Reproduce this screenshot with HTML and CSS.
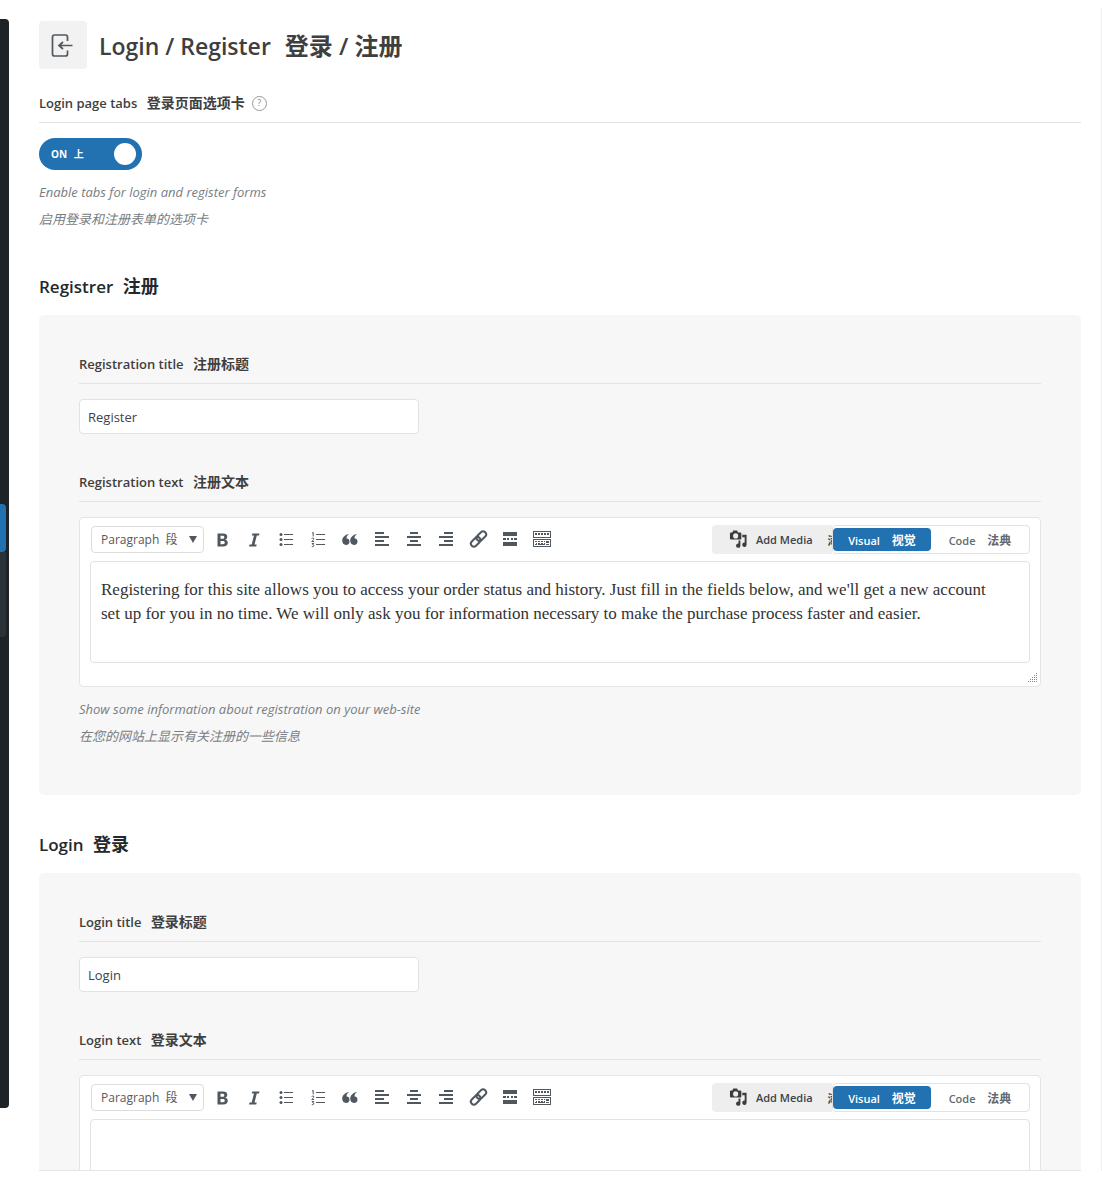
FILE: index.html
```html
<!DOCTYPE html>
<html lang="en">
<head>
    <meta charset="UTF-8">
    <meta name="viewport" content="width=device-width, initial-scale=1.0">
    <title>Login / Register</title>
    <link rel="stylesheet" href="styles.css">
</head>
<body>

    <!-- Icons shared by both editors -->
    <svg class="icon-defs" aria-hidden="true">
        <symbol id="icon-bold" viewBox="0 0 20 20">
            <path fill-rule="evenodd" d="M5.500 3.500h5.600c2.700 0 4.200 1.200 4.200 3.300 0 1.500-.8 2.600-2.200 2.900 1.700.3 2.700 1.400 2.700 3.100 0 2.400-1.700 3.700-4.600 3.700H5.500zM8.500 5.800v3h2c1.200 0 1.800-.5 1.800-1.500S11.700 5.800 10.500 5.800zM8.500 11v3.200h2.300c1.300 0 2-.5 2-1.600S12.100 11 10.800 11z"/>
        </symbol>
        <symbol id="icon-italic" viewBox="0 0 20 20">
            <path d="M8.300 3.500h7.200l-.5 2h-2.200l-2.300 9h2.200l-.5 2H5l.5-2h2.200l2.300-9H7.800z"/>
        </symbol>
        <symbol id="icon-ul" viewBox="0 0 20 20">
            <path d="M8 4h9v1H8zM8 9h9v1H8zM8 14h9v1H8z"/>
            <circle cx="5" cy="4.500" r="1.500"/>
            <circle cx="5" cy="9.500" r="1.500"/>
            <circle cx="5" cy="14.500" r="1.500"/>
        </symbol>
        <symbol id="icon-ol" viewBox="0 0 20 20">
            <path d="M8 4h9v1H8zM8 9h9v1H8zM8 14h9v1H8z"/>
            <path class="thin" d="M4 3.200l1.200-.8v4M3.800 8.600c.4-1 2.200-.8 2 .4-.1.700-1.200 1.500-2 2.500h2.200M3.800 13.500h2l-1.100 1.400c1.900-.1 1.500 2.200-.9 1.700"/>
        </symbol>
        <symbol id="icon-quote" viewBox="0 0 20 20">
            <path d="M9.300 4C6.900 5.300 6.300 7.300 6.600 8.500c1.600-.1 2.900 1.200 2.900 3.100 0 2-1.300 3.400-3.400 3.400-2.400 0-3.900-1.900-3.900-4.400C2.200 7.600 4.900 4.600 9.300 4zM17.300 4c-2.400 1.300-3 3.300-2.700 4.500 1.600-.1 2.900 1.200 2.900 3.100 0 2-1.300 3.400-3.400 3.400-2.400 0-3.900-1.900-3.900-4.400 0-3 2.700-6 7.100-6.600z"/>
        </symbol>
        <symbol id="icon-left" viewBox="0 0 20 20">
            <path d="M3 2h9v2H3zM3 6h14v2H3zM3 10h9v2H3zM3 14h14v2H3z"/>
        </symbol>
        <symbol id="icon-center" viewBox="0 0 20 20">
            <path d="M6 2h8v2H6zM3 6h14v2H3zM6 10h8v2H6zM3 14h14v2H3z"/>
        </symbol>
        <symbol id="icon-right" viewBox="0 0 20 20">
            <path d="M8 2h9v2H8zM3 6h14v2H3zM8 10h9v2H8zM3 14h14v2H3z"/>
        </symbol>
        <symbol id="icon-link" viewBox="0 0 20 20">
            <g class="thick" transform="rotate(-45 10.500 9)">
                <rect x="1" y="6" width="11" height="6" rx="3"/>
                <rect x="9" y="6" width="11" height="6" rx="3"/>
            </g>
        </symbol>
        <symbol id="icon-more" viewBox="0 0 20 20">
            <path d="M3 2h14v4H3zM3 8h3v2H3zM7 8h2v2H7zM11 8h2v2h-2zM14 8h3v2h-3zM3 12h14v4H3z"/>
        </symbol>
        <symbol id="icon-keyboard" viewBox="0 0 20 20">
            <path fill-rule="evenodd" d="M1 1h18v7H1zM2 2v5h16V2zM1 9h18v8H1zM2 10v6h16v-6z"/>
            <path d="M3 3h2v2H3zM6 3h2v2H6zM9 3h2v2H9zM12 3h2v2h-2zM15 3h2v2h-2zM3 11h2v1H3zM6 11h2v1H6zM9 11h2v1H9zM12 11h1v1h-1zM14 11h3v2h-3zM4 13h1v1H4zM6 13h2v1H6zM9 13h2v1H9zM12 13h1v1h-1zM3 14h2v1H3zM6 14h7v1H6zM14 14h3v1h-3z"/>
        </symbol>
        <symbol id="icon-media" viewBox="0 0 20 20">
            <path fill-rule="evenodd" d="M2 2.500h1.500L4.500.5h4l1 2h2.500c.6 0 1 .4 1 1V9c0 .6-.4 1-1 1H2c-.6 0-1-.4-1-1V3.500c0-.6.4-1 1-1zM7 3.500a2.700 2.700 0 1 0 0 5.400 2.700 2.700 0 0 0 0-5.400z"/>
            <path d="M14 5h4.500v10.500a2.300 2.300 0 1 1-2-2.300V7.500H14zM12 11v5.500a2.300 2.300 0 1 1-2-2.300V11z"/>
        </symbol>
    </svg>

    <div class="page">
        <nav class="sidebar" aria-label="Admin menu">
            <div class="menu-current"></div>
            <div class="submenu"></div>
        </nav>

        <main class="content">
            <div class="options">
                <header class="page-header">
                    <span class="page-icon">
                        <svg viewBox="0 0 24 24" aria-hidden="true">
                            <path d="M16.500 8V4Q16.500 2 14.500 2H3.500Q1.500 2 1.500 4V21Q1.500 23 3.500 23H14.500Q16.500 23 16.500 21V17.500M21.500 12.500H8M12 9L8 12.500L12 16"/>
                        </svg>
                    </span>
                    <h1>Login / Register <span lang="zh">登录 / 注册</span></h1>
                </header>

                <div class="field">
                    <div class="field-title">
                        <label for="loginTabs">Login page tabs <span lang="zh">登录页面选项卡</span></label>
                        <button type="button" class="hint" aria-label="Help">?</button>
                    </div>
                    <div class="switch">
                        <input type="checkbox" id="loginTabs" checked>
                        <span class="switch-text">ON <span lang="zh">上</span></span>
                        <span class="knob"></span>
                    </div>
                    <p class="description">Enable tabs for login and register forms</p>
                    <p class="description" lang="zh">启用登录和注册表单的选项卡</p>
                </div>

                <h2>Registrer <span lang="zh">注册</span></h2>
                <section class="group">
                    <div class="field">
                        <div class="field-title">
                            <label for="regTitle">Registration title <span lang="zh">注册标题</span></label>
                        </div>
                        <input type="text" class="text-input" id="regTitle" value="Register">
                    </div>

                    <div class="field">
                        <div class="field-title">
                            <label for="regText">Registration text <span lang="zh">注册文本</span></label>
                        </div>
                        <div class="editor">
                            <div class="toolbar">
                                <select class="format" aria-label="Format">
                                    <option>Paragraph&nbsp; 段</option>
                                </select>
                                <div class="tools">
                                    <button type="button" aria-label="Bold"><svg><use href="#icon-bold"/></svg></button>
                                    <button type="button" aria-label="Italic"><svg><use href="#icon-italic"/></svg></button>
                                    <button type="button" aria-label="Bulleted list"><svg><use href="#icon-ul"/></svg></button>
                                    <button type="button" aria-label="Numbered list"><svg><use href="#icon-ol"/></svg></button>
                                    <button type="button" aria-label="Blockquote"><svg><use href="#icon-quote"/></svg></button>
                                    <button type="button" aria-label="Align left"><svg><use href="#icon-left"/></svg></button>
                                    <button type="button" aria-label="Align center"><svg><use href="#icon-center"/></svg></button>
                                    <button type="button" aria-label="Align right"><svg><use href="#icon-right"/></svg></button>
                                    <button type="button" aria-label="Link"><svg><use href="#icon-link"/></svg></button>
                                    <button type="button" aria-label="Read more"><svg><use href="#icon-more"/></svg></button>
                                    <button type="button" aria-label="Toolbar toggle"><svg><use href="#icon-keyboard"/></svg></button>
                                </div>
                                <button type="button" class="add-media"><svg><use href="#icon-media"/></svg>Add Media <span lang="zh">添</span></button>
                                <div class="mode">
                                    <button type="button" class="active">Visual <span lang="zh">视觉</span></button>
                                    <button type="button">Code <span lang="zh">法典</span></button>
                                </div>
                            </div>
                            <textarea id="regText">Registering for this site allows you to access your order status and history. Just fill in the fields below, and we'll get a new account set up for you in no time. We will only ask you for information necessary to make the purchase process faster and easier.</textarea>
                            <div class="statusbar">
                                <svg class="grip" viewBox="0 0 10 10" aria-hidden="true">
                                    <path d="M8.500 0v10M6.500 2v8M4.500 4v6M2.500 6v4M.5 8v2"/>
                                </svg>
                            </div>
                        </div>
                        <p class="description">Show some information about registration on your web-site</p>
                        <p class="description" lang="zh">在您的网站上显示有关注册的一些信息</p>
                    </div>
                </section>

                <h2>Login <span lang="zh">登录</span></h2>
                <section class="group">
                    <div class="field">
                        <div class="field-title">
                            <label for="loginTitle">Login title <span lang="zh">登录标题</span></label>
                        </div>
                        <input type="text" class="text-input" id="loginTitle" value="Login">
                    </div>

                    <div class="field">
                        <div class="field-title">
                            <label for="loginText">Login text <span lang="zh">登录文本</span></label>
                        </div>
                        <div class="editor">
                            <div class="toolbar">
                                <select class="format" aria-label="Format">
                                    <option>Paragraph&nbsp; 段</option>
                                </select>
                                <div class="tools">
                                    <button type="button" aria-label="Bold"><svg><use href="#icon-bold"/></svg></button>
                                    <button type="button" aria-label="Italic"><svg><use href="#icon-italic"/></svg></button>
                                    <button type="button" aria-label="Bulleted list"><svg><use href="#icon-ul"/></svg></button>
                                    <button type="button" aria-label="Numbered list"><svg><use href="#icon-ol"/></svg></button>
                                    <button type="button" aria-label="Blockquote"><svg><use href="#icon-quote"/></svg></button>
                                    <button type="button" aria-label="Align left"><svg><use href="#icon-left"/></svg></button>
                                    <button type="button" aria-label="Align center"><svg><use href="#icon-center"/></svg></button>
                                    <button type="button" aria-label="Align right"><svg><use href="#icon-right"/></svg></button>
                                    <button type="button" aria-label="Link"><svg><use href="#icon-link"/></svg></button>
                                    <button type="button" aria-label="Read more"><svg><use href="#icon-more"/></svg></button>
                                    <button type="button" aria-label="Toolbar toggle"><svg><use href="#icon-keyboard"/></svg></button>
                                </div>
                                <button type="button" class="add-media"><svg><use href="#icon-media"/></svg>Add Media <span lang="zh">添</span></button>
                                <div class="mode">
                                    <button type="button" class="active">Visual <span lang="zh">视觉</span></button>
                                    <button type="button">Code <span lang="zh">法典</span></button>
                                </div>
                            </div>
                            <textarea id="loginText"></textarea>
                        </div>
                    </div>
                </section>
            </div>
        </main>
    </div>

</body>
</html>
```
FILE: styles.css
```css
* {
    box-sizing: border-box;
}
body {
    margin: 0;
    font-family: "Open Sans", "Noto Sans CJK SC", sans-serif;
    font-size: 13px;
    color: #3c434a;
    background-color: #fff;
}
button, input, select {
    font-family: inherit;
}
h1, h2, p {
    margin: 0;
}
.icon-defs {
    display: none;
}
.page {
    display: flex;
    height: 100vh;
    padding: 8px 0 7px;
    overflow: hidden;
}

/* Sidebar */
.sidebar {
    flex: none;
    width: 9px;
    margin: 11px 0 63px;
    padding: 485px 3px 0 0;
    background-color: #1d2327;
    border-radius: 0 4px 4px 0;
}
.menu-current {
    height: 48px;
    background-color: #2271b1;
    border-radius: 0 4px 4px 0;
}
.submenu {
    height: 85px;
    background-color: #2c3338;
    border-radius: 0 0 4px 0;
}

/* Content */
.content {
    flex: 1;
    min-width: 0;
    padding: 13px 20px 0 30px;
    border-right: 1px solid #eee;
}
.options {
    height: 100%;
    border-bottom: 1px solid #e5e5e5;
    overflow: hidden;
}
.page-header {
    display: flex;
    align-items: center;
    gap: 12px;
    margin-bottom: 25px;
}
.page-icon {
    display: flex;
    align-items: center;
    justify-content: center;
    width: 48px;
    height: 48px;
    background-color: #f2f2f2;
    border-radius: 4px;
}
.page-icon svg {
    width: 24px;
    height: 24px;
    fill: none;
    stroke: #50575e;
    stroke-width: 1.7;
}
h1 {
    padding-top: 2px;
    font-size: 23px;
    font-weight: 600;
    line-height: 32px;
    color: #3f3f3f;
}
h1 span {
    margin-left: 8px;
    font-size: 24px;
}
h2 {
    margin: 37px 0 16px;
    font-size: 17px;
    font-weight: 600;
    line-height: 24px;
    color: #23282d;
}
h2 span {
    margin-left: 5px;
    font-size: 18px;
}
.group {
    padding: 40px 40px 45px;
    background-color: #f7f7f7;
    border-radius: 5px;
}
.field + .field {
    margin-top: 39px;
}
.options > .field {
    margin-bottom: 41px;
}
.field-title {
    display: flex;
    align-items: center;
    gap: 7px;
    height: 29px;
    margin-bottom: 15px;
    padding-bottom: 10px;
    border-bottom: 1px solid #e3e3e3;
    font-weight: 600;
    line-height: 18px;
    color: #3f3f3f;
}
.field-title span {
    margin-left: 6px;
    font-size: 14px;
}
.hint {
    width: 15px;
    height: 15px;
    padding: 0;
    border: 1px solid #999;
    border-radius: 50%;
    background: none;
    font-size: 9px;
    line-height: 12px;
    color: #888;
}
.switch {
    position: relative;
    display: flex;
    align-items: center;
    justify-content: space-between;
    width: 103px;
    height: 32px;
    margin-bottom: 9px;
    padding: 0 6px 0 12px;
    background-color: #2271b1;
    border-radius: 16px;
    color: #fff;
}
.switch input {
    position: absolute;
    inset: 0;
    width: 100%;
    height: 100%;
    margin: 0;
    opacity: 0;
    cursor: pointer;
}
.switch-text {
    padding-bottom: 2px;
    font-size: 10px;
    font-weight: 700;
}
.switch-text span {
    margin-left: 4px;
}
.knob {
    width: 22px;
    height: 22px;
    background-color: #fff;
    border-radius: 50%;
}
.description {
    font-size: 13px;
    font-style: italic;
    line-height: 27px;
    color: #777d83;
}
.text-input {
    display: block;
    width: 340px;
    max-width: 100%;
    height: 35px;
    padding: 0 8px;
    border: 1px solid #e2e2e2;
    border-radius: 4px;
    background-color: #fff;
    font-size: 13px;
    color: #3c434a;
}

/* Editor */
.editor {
    margin-bottom: 9px;
    padding: 7px 10px 0;
    border: 1px solid #e5e5e5;
    border-radius: 4px;
    background-color: #fff;
}
.toolbar {
    display: flex;
    align-items: center;
    height: 29px;
    margin-bottom: 7px;
}
.format {
    width: 113px;
    height: 27px;
    margin: 0 2px 0 1px;
    padding: 0 9px;
    appearance: none;
    border: 1px solid #ddd;
    border-radius: 4px;
    background: #fff url("data:image/svg+xml,%3Csvg xmlns='http://www.w3.org/2000/svg' width='8' height='7'%3E%3Cpath d='M0 0h8L4 7z' fill='%2350575e'/%3E%3C/svg%3E") no-repeat right 6px center;
    font-size: 12px;
    color: #595959;
}
.tools {
    display: flex;
    margin-right: auto;
}
.tools button {
    display: flex;
    align-items: center;
    justify-content: center;
    width: 32px;
    height: 28px;
    padding: 0;
    border: none;
    background: none;
}
.tools svg {
    width: 20px;
    height: 20px;
    fill: #50575e;
}
.thin {
    fill: none;
    stroke: #50575e;
    stroke-width: 1;
}
.thick {
    fill: none;
    stroke: #50575e;
    stroke-width: 2;
}
.add-media {
    display: flex;
    align-items: center;
    width: 120px;
    height: 29px;
    padding: 0 0 0 17px;
    border: none;
    border-radius: 4px 0 0 4px;
    background-color: #eee;
    font-size: 11px;
    font-weight: 600;
    color: #3c434a;
    white-space: nowrap;
    overflow: hidden;
}
.add-media svg {
    flex: none;
    width: 19px;
    height: 19px;
    margin-right: 8px;
    fill: #3c3c3c;
}
.add-media span {
    margin-left: 15px;
}
.mode {
    display: flex;
    height: 29px;
    padding: 2px 0;
    border: 1px solid #e2e2e2;
    border-radius: 4px;
    background-color: #fff;
}
.mode button {
    width: 98px;
    padding: 0;
    border: none;
    border-radius: 4px;
    background: none;
    font-size: 11px;
    font-weight: 600;
    color: #646970;
}
.mode span {
    margin-left: 9px;
    font-size: 12px;
}
.mode .active {
    background-color: #2271b1;
    color: #fff;
}
textarea {
    display: block;
    width: 100%;
    height: 102px;
    padding: 16px 32px 10px 10px;
    border: 1px solid #e2e2e2;
    border-radius: 4px;
    background-color: #fff;
    font-family: Georgia, "Liberation Serif", serif;
    font-size: 17px;
    line-height: 24px;
    color: #333;
    resize: none;
}
.statusbar {
    display: flex;
    align-items: flex-end;
    justify-content: flex-end;
    height: 23px;
    margin-right: -8px;
    padding-bottom: 3px;
}
.grip {
    width: 10px;
    height: 10px;
    fill: none;
    stroke: #888;
    stroke-dasharray: 1 1;
}
```
